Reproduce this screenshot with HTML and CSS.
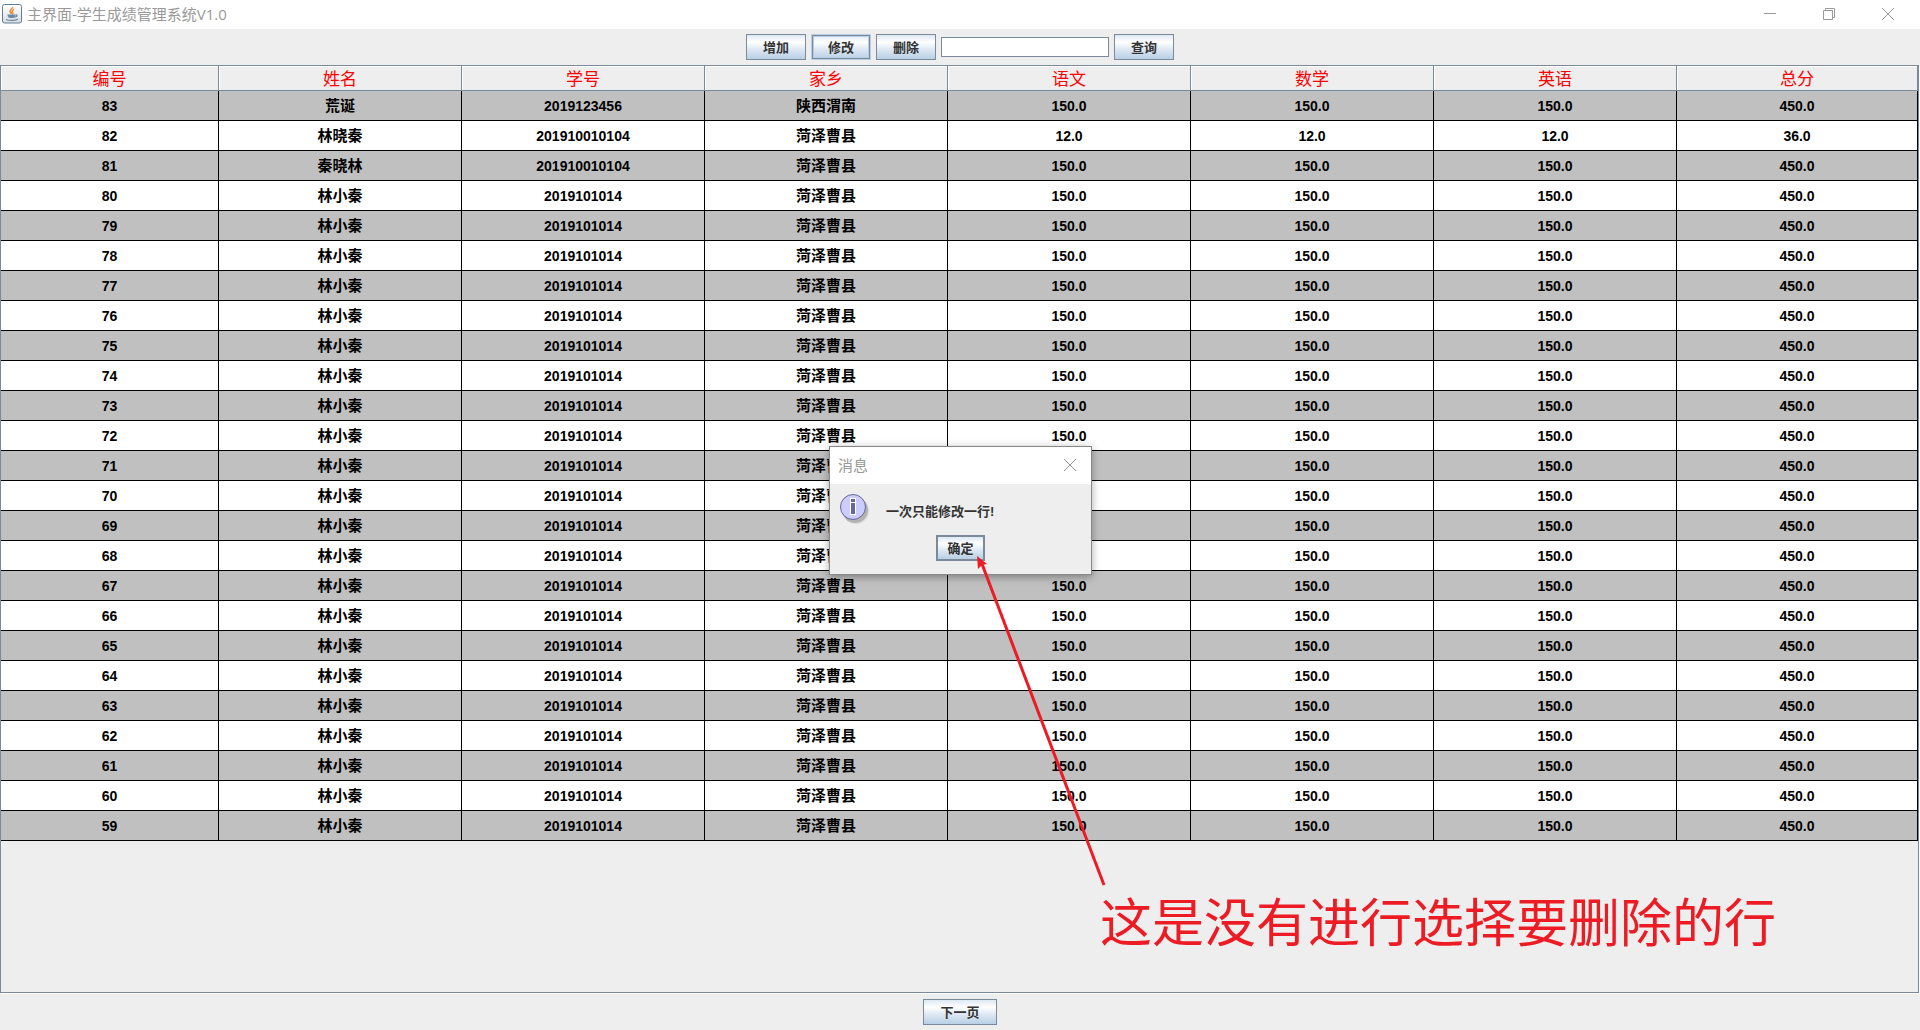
FILE: index.html
```html
<!DOCTYPE html>
<html lang="zh-CN">
<head>
<meta charset="utf-8">
<title>主界面-学生成绩管理系统V1.0</title>
<link rel="stylesheet" href="styles.css">
</head>
<body>
<header class="titlebar">
  <svg class="app-icon" viewBox="0 0 20 20" aria-hidden="true">
    <defs>
      <linearGradient id="tile" x1="0" y1="0" x2="0" y2="1"><stop offset="0" stop-color="#fff"/><stop offset="1" stop-color="#d9dde2"/></linearGradient>
    </defs>
    <rect x="0.5" y="0.5" width="19" height="18.500" rx="2" fill="url(#tile)" stroke="#5f7d95"/>
    <path d="M10.500 3c1 1.500-3 2.500-2.500 4.500.2 1 1.300 1.500 1.500 2.500M12 5.500c-2 1-2.500 2-1.500 3 .6.700.3 1.300-.5 1.700" fill="none" stroke="#ee8a35" stroke-width="1.500"/>
    <path d="M5.500 10.500h8c0 2-1 3.500-2.500 3.500H8c-1.500 0-2.500-1.500-2.500-3.500z" fill="#6d8ba5"/>
    <path d="M13.500 11c2.500-.5 2 1.800-1 2.200M4 15.500c3 1.300 9 1.300 12-.3" fill="none" stroke="#6d8ba5" stroke-width="1.200"/>
  </svg>
  <h1 class="title">主界面-学生成绩管理系统V1.0</h1>
  <div class="window-controls">
    <button class="win-btn" type="button" aria-label="最小化"><svg viewBox="0 0 12 12"><path d="M0 5.500h12"/></svg></button>
    <button class="win-btn" type="button" aria-label="还原"><svg viewBox="0 0 12 12"><path d="M.5 2.500h9v9h-9zM2.500 2.500v-2h9v9h-2"/></svg></button>
    <button class="win-btn" type="button" aria-label="关闭"><svg viewBox="0 0 12 12"><path d="M0 0l12 12M12 0L0 12"/></svg></button>
  </div>
</header>
<main class="content">
  <form class="toolbar">
    <button class="btn" type="button">增加</button>
    <button class="btn btn-focus" type="button">修改</button>
    <button class="btn" type="button">删除</button>
    <input class="search" type="text" aria-label="查询内容">
    <button class="btn" type="button">查询</button>
  </form>
  <div class="scroll-pane">
    <table class="grid">
      <colgroup><col class="col-id"><col span="6"><col class="col-total"></colgroup>
      <thead><tr><th>编号</th><th>姓名</th><th>学号</th><th>家乡</th><th>语文</th><th>数学</th><th>英语</th><th>总分</th></tr></thead>
      <tbody>
        <tr><td>83</td><td>荒诞</td><td>2019123456</td><td>陕西渭南</td><td>150.0</td><td>150.0</td><td>150.0</td><td>450.0</td></tr>
        <tr><td>82</td><td>林晓秦</td><td>201910010104</td><td>菏泽曹县</td><td>12.0</td><td>12.0</td><td>12.0</td><td>36.0</td></tr>
        <tr><td>81</td><td>秦晓林</td><td>201910010104</td><td>菏泽曹县</td><td>150.0</td><td>150.0</td><td>150.0</td><td>450.0</td></tr>
        <tr><td>80</td><td>林小秦</td><td>2019101014</td><td>菏泽曹县</td><td>150.0</td><td>150.0</td><td>150.0</td><td>450.0</td></tr>
        <tr><td>79</td><td>林小秦</td><td>2019101014</td><td>菏泽曹县</td><td>150.0</td><td>150.0</td><td>150.0</td><td>450.0</td></tr>
        <tr><td>78</td><td>林小秦</td><td>2019101014</td><td>菏泽曹县</td><td>150.0</td><td>150.0</td><td>150.0</td><td>450.0</td></tr>
        <tr><td>77</td><td>林小秦</td><td>2019101014</td><td>菏泽曹县</td><td>150.0</td><td>150.0</td><td>150.0</td><td>450.0</td></tr>
        <tr><td>76</td><td>林小秦</td><td>2019101014</td><td>菏泽曹县</td><td>150.0</td><td>150.0</td><td>150.0</td><td>450.0</td></tr>
        <tr><td>75</td><td>林小秦</td><td>2019101014</td><td>菏泽曹县</td><td>150.0</td><td>150.0</td><td>150.0</td><td>450.0</td></tr>
        <tr><td>74</td><td>林小秦</td><td>2019101014</td><td>菏泽曹县</td><td>150.0</td><td>150.0</td><td>150.0</td><td>450.0</td></tr>
        <tr><td>73</td><td>林小秦</td><td>2019101014</td><td>菏泽曹县</td><td>150.0</td><td>150.0</td><td>150.0</td><td>450.0</td></tr>
        <tr><td>72</td><td>林小秦</td><td>2019101014</td><td>菏泽曹县</td><td>150.0</td><td>150.0</td><td>150.0</td><td>450.0</td></tr>
        <tr><td>71</td><td>林小秦</td><td>2019101014</td><td>菏泽曹县</td><td>150.0</td><td>150.0</td><td>150.0</td><td>450.0</td></tr>
        <tr><td>70</td><td>林小秦</td><td>2019101014</td><td>菏泽曹县</td><td>150.0</td><td>150.0</td><td>150.0</td><td>450.0</td></tr>
        <tr><td>69</td><td>林小秦</td><td>2019101014</td><td>菏泽曹县</td><td>150.0</td><td>150.0</td><td>150.0</td><td>450.0</td></tr>
        <tr><td>68</td><td>林小秦</td><td>2019101014</td><td>菏泽曹县</td><td>150.0</td><td>150.0</td><td>150.0</td><td>450.0</td></tr>
        <tr><td>67</td><td>林小秦</td><td>2019101014</td><td>菏泽曹县</td><td>150.0</td><td>150.0</td><td>150.0</td><td>450.0</td></tr>
        <tr><td>66</td><td>林小秦</td><td>2019101014</td><td>菏泽曹县</td><td>150.0</td><td>150.0</td><td>150.0</td><td>450.0</td></tr>
        <tr><td>65</td><td>林小秦</td><td>2019101014</td><td>菏泽曹县</td><td>150.0</td><td>150.0</td><td>150.0</td><td>450.0</td></tr>
        <tr><td>64</td><td>林小秦</td><td>2019101014</td><td>菏泽曹县</td><td>150.0</td><td>150.0</td><td>150.0</td><td>450.0</td></tr>
        <tr><td>63</td><td>林小秦</td><td>2019101014</td><td>菏泽曹县</td><td>150.0</td><td>150.0</td><td>150.0</td><td>450.0</td></tr>
        <tr><td>62</td><td>林小秦</td><td>2019101014</td><td>菏泽曹县</td><td>150.0</td><td>150.0</td><td>150.0</td><td>450.0</td></tr>
        <tr><td>61</td><td>林小秦</td><td>2019101014</td><td>菏泽曹县</td><td>150.0</td><td>150.0</td><td>150.0</td><td>450.0</td></tr>
        <tr><td>60</td><td>林小秦</td><td>2019101014</td><td>菏泽曹县</td><td>150.0</td><td>150.0</td><td>150.0</td><td>450.0</td></tr>
        <tr><td>59</td><td>林小秦</td><td>2019101014</td><td>菏泽曹县</td><td>150.0</td><td>150.0</td><td>150.0</td><td>450.0</td></tr>
      </tbody>
    </table>
  </div>
  <footer class="pager"><button class="btn" type="button">下一页</button></footer>
</main>

<section class="dialog" role="dialog" aria-labelledby="dialog-title">
  <div class="dialog-head">
    <h2 class="title" id="dialog-title">消息</h2>
    <button class="dialog-close" type="button" aria-label="关闭"><svg viewBox="0 0 12 12"><path d="M0 0l12 12M12 0L0 12"/></svg></button>
  </div>
  <div class="dialog-body">
    <div class="dialog-message">
      <svg class="info-icon" viewBox="0 0 32 32" aria-hidden="true">
        <circle cx="16" cy="17" r="13" fill="#000" opacity=".08"/>
        <circle cx="15" cy="16" r="13" fill="#000" opacity=".18"/>
        <circle cx="13" cy="13" r="12.500" fill="#ccccff" stroke="#666699"/>
        <path d="M10 4h6v17h-6z" fill="#fff"/>
        <path d="M11 5h4v3h-4zM11 9h4v11h-4z" fill="#666699"/>
      </svg>
      <p class="message">一次只能修改一行!</p>
    </div>
    <button class="btn btn-default" type="button">确定</button>
  </div>
</section>

<div class="annotation">
  <svg class="arrow" viewBox="0 0 130 332" aria-hidden="true">
    <path d="M127 329L5 8" stroke="#ed1c24" stroke-width="3" fill="none"/>
    <path d="M0 0L10 8L5 9L1 13z" fill="#ed1c24"/>
  </svg>
  <p class="note">这是没有进行选择要删除的行</p>
</div>
</body>
</html>
```
FILE: styles.css
```css
* { box-sizing: border-box; }

body {
  position: relative;
  display: flex;
  flex-direction: column;
  min-height: 100vh;
  margin: 0;
  background: #eee;
  color: #333;
  font-family: "Liberation Sans", "Noto Sans CJK SC", sans-serif;
  overflow-x: hidden;
}

button, input { margin: 0; font: inherit; color: inherit; }
button { padding: 0; }
h1, h2, p { margin: 0; }

.titlebar {
  display: flex;
  align-items: center;
  height: 29px;
  padding: 0 0 2px 2px;
  background: #fff;
}
.app-icon { width: 20px; height: 20px; margin-right: 5px; }
.title {
  font: 400 15px/20px "Open Sans", "Noto Sans CJK SC", sans-serif;
  color: #999;
}
.window-controls { display: flex; gap: 12px; margin-left: auto; padding-right: 9px; }
.win-btn, .dialog-close {
  display: grid;
  place-items: center;
  border: 0;
  background: none;
}
.win-btn { width: 47px; height: 26px; }
.win-btn svg, .dialog-close svg {
  width: 12px;
  height: 12px;
  fill: none;
  stroke: #999;
  overflow: visible;
}

.content { display: flex; flex: 1; flex-direction: column; }

.toolbar, .pager {
  display: flex;
  justify-content: center;
  align-items: center;
  gap: 5px;
  height: 36px;
}
.btn {
  height: 26px;
  padding: 2px 16px 0;
  border: 1px solid #7a8a99;
  background: linear-gradient(#dde8f3, #fff 30%, #dde8f3 60%, #b8cfe5);
  font-weight: 700;
  font-size: 13px;
  line-height: 20px;
}
.btn-focus { border-color: #b8cfe5; box-shadow: inset 0 0 0 1px #7a8a99, inset 0 0 0 2px #b8cfe5; }
.search {
  width: 168px;
  height: 20px;
  border: 1px solid #7a8a99;
  background: #fff;
}

.scroll-pane {
  flex: 1;
  margin: 0 1px 1px 0;
  border: 1px solid #7a8a99;
  box-shadow: 1px 1px #fff;
}
.grid {
  width: 100%;
  border-spacing: 0;
  table-layout: fixed;
  text-align: center;
  color: #000;
}
.col-id { width: 218px; }
.col-total { width: 241px; }
.grid th {
  height: 25px;
  padding: 3px 0 0;
  border-right: 1px solid #7a8a99;
  border-bottom: 1px solid #7a8a99;
  box-shadow: inset 1px 1px #fff;
  color: #f00;
  font-weight: 400;
  font-size: 17px;
  line-height: 21px;
}
.grid td {
  height: 30px;
  padding: 0;
  border-right: 1px solid #000;
  border-bottom: 1px solid #000;
  background: #fff;
  font-weight: 700;
  font-size: 14px;
  line-height: 28px;
}
.grid td:nth-child(2), .grid td:nth-child(4) { font-size: 15px; }
.grid tbody tr:nth-child(odd) td { background: #c0c0c0; }

.dialog {
  position: absolute;
  top: 446px;
  left: calc(50% - 131px);
  width: 263px;
  border: 1px solid #888;
  background: #eee;
  box-shadow: 0 2px 8px rgba(0, 0, 0, .35);
}
.dialog-head {
  display: flex;
  align-items: center;
  justify-content: space-between;
  height: 37px;
  padding: 0 8px 2px;
  background: #fff;
}
.dialog-close { width: 26px; height: 26px; }
.dialog-body {
  display: flex;
  flex-direction: column;
  align-items: center;
  padding: 10px 10px 13px;
}
.dialog-message { display: flex; align-self: stretch; gap: 14px; height: 41px; }
.info-icon { width: 32px; height: 32px; }
.message { padding-top: 8px; font-weight: 700; font-size: 13px; line-height: 20px; }
.btn-default { padding: 2px 9px 0; border-width: 2px; }

.annotation {
  position: absolute;
  top: 556px;
  left: calc(50% + 17px);
  color: #ed1c24;
  pointer-events: none;
}
.arrow { display: block; width: 130px; height: 332px; }
.note {
  padding-left: 123px;
  font: 400 52px/64px "Noto Sans CJK SC", sans-serif;
  white-space: nowrap;
}
```
